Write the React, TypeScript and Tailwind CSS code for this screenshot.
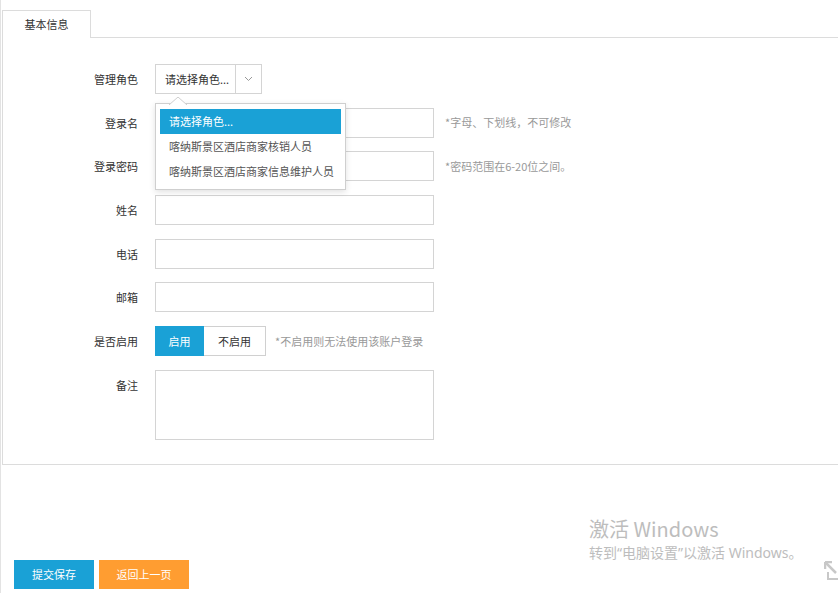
import React from "react";

const font = { fontFamily: '"Noto Sans CJK SC", "Noto Sans", sans-serif' };

function Row({ label, children, hint, hintGap = "ml-[11px]" }: { label: string; children: React.ReactNode; hint?: string; hintGap?: string }) {
  return (
    <div className="flex items-start">
      <div className="w-[135px] text-right text-[11px] leading-[30px] text-[#333]">{label}</div>
      <div className="ml-[17px] flex items-center">
        {children}
        {hint && <span className={`${hintGap} text-[11px] text-[#999]`}>{hint}</span>}
      </div>
    </div>
  );
}

function Input() {
  return <div className="h-[30px] w-[279px] border border-[#d4d4d4] bg-white" />;
}

export default function App() {
  return (
    <div className="relative min-h-[593px] overflow-hidden border-l border-[#e3e3e3] bg-white" style={font}>
      <div className="ml-[1px] pt-[10px]">
        <div className="flex">
          <div className="flex h-[28px] w-[89px] items-center justify-center border border-b-0 border-[#dcdcdc] bg-white text-[11px] text-[#333]">
            基本信息
          </div>
          <div className="h-[28px] flex-1 border-b border-[#dcdcdc]" />
        </div>
        <div className="flex h-[427px] flex-col gap-[13.7px] border-b border-l border-[#dcdcdc] pt-[26px]">
          <Row label="管理角色">
            <div className="relative">
              <div className="flex h-[30px] w-[107px] items-stretch border border-[#d4d4d4] bg-white">
                <div className="flex flex-1 items-center pl-[9px] text-[11px] text-[#333]">请选择角色...</div>
                <div className="flex w-[26px] items-center justify-center border-l border-[#d4d4d4]">
                  <svg width="9" height="6" viewBox="0 0 9 6">
                    <path d="M1 1 L4.5 4.5 L8 1" fill="none" stroke="#999" strokeWidth="1" />
                  </svg>
                </div>
              </div>
              <div className="absolute left-0 top-[39px] z-10 w-[191px] border border-[#cfcfcf] bg-white px-[4px] pb-[5px] pt-[5px] shadow-[0_2px_6px_rgba(0,0,0,0.12)]">
                <svg className="absolute left-[13px] top-[-7px]" width="18" height="8" viewBox="0 0 18 8">
                  <path d="M0 8 L9 0 L18 8" fill="#fff" stroke="#cfcfcf" strokeWidth="1" />
                </svg>
                <div className="flex h-[25px] items-center bg-[#1aa1d6] pl-[9px] text-[11px] text-white">请选择角色...</div>
                <div className="flex h-[25px] items-center pl-[9px] text-[11px] text-[#555]">喀纳斯景区酒店商家核销人员</div>
                <div className="flex h-[25px] items-center pl-[9px] text-[11px] text-[#555]">喀纳斯景区酒店商家信息维护人员</div>
              </div>
            </div>
          </Row>
          <Row label="登录名" hint="*字母、下划线，不可修改">
            <Input />
          </Row>
          <Row label="登录密码" hint="*密码范围在6-20位之间。">
            <Input />
          </Row>
          <Row label="姓名">
            <Input />
          </Row>
          <Row label="电话">
            <Input />
          </Row>
          <Row label="邮箱">
            <Input />
          </Row>
          <Row label="是否启用" hint="*不启用则无法使用该账户登录" hintGap="ml-[9px]">
            <div className="flex h-[30px]">
              <div className="flex w-[49px] items-center justify-center bg-[#1aa1d6] text-[11px] text-white">启用</div>
              <div className="flex w-[62px] items-center justify-center border border-l-0 border-[#d0d0d0] text-[11px] text-[#333]">不启用</div>
            </div>
          </Row>
          <Row label="备注">
            <div className="h-[70px] w-[279px] border border-[#d4d4d4] bg-white" />
          </Row>
        </div>
      </div>
      <div className="mt-[95px] flex gap-[5px] pl-[13px]">
        <div className="flex h-[29px] w-[80px] items-center justify-center bg-[#1aa1d6] text-[11px] text-white">提交保存</div>
        <div className="flex h-[29px] w-[90px] items-center justify-center bg-[#ff9d31] text-[11px] text-white">返回上一页</div>
      </div>

      <div className="pointer-events-none absolute left-[588px] top-[515px] text-[#bdbdbd]">
        <div className="text-[20px] leading-[28px]">激活 Windows</div>
        <div
          className="text-[14px] leading-[20px]"
          style={{ fontFamily: '"Noto Sans", "Noto Sans CJK SC", sans-serif' }}
        >
          转到“电脑设置”以激活 Windows。
        </div>
      </div>
      <svg className="absolute left-[823px] top-[561px]" width="16" height="20" viewBox="0 0 16 20">
        <path d="M2 2 L12 12" stroke="#c8c8c8" strokeWidth="2.5" fill="none" />
        <path d="M1 1 L8 1 M1 1 L1 8" stroke="#c8c8c8" strokeWidth="2.5" fill="none" />
        <path d="M4 11 L4 18 L15 18" stroke="#c8c8c8" strokeWidth="2" fill="none" />
      </svg>
    </div>
  );
}
